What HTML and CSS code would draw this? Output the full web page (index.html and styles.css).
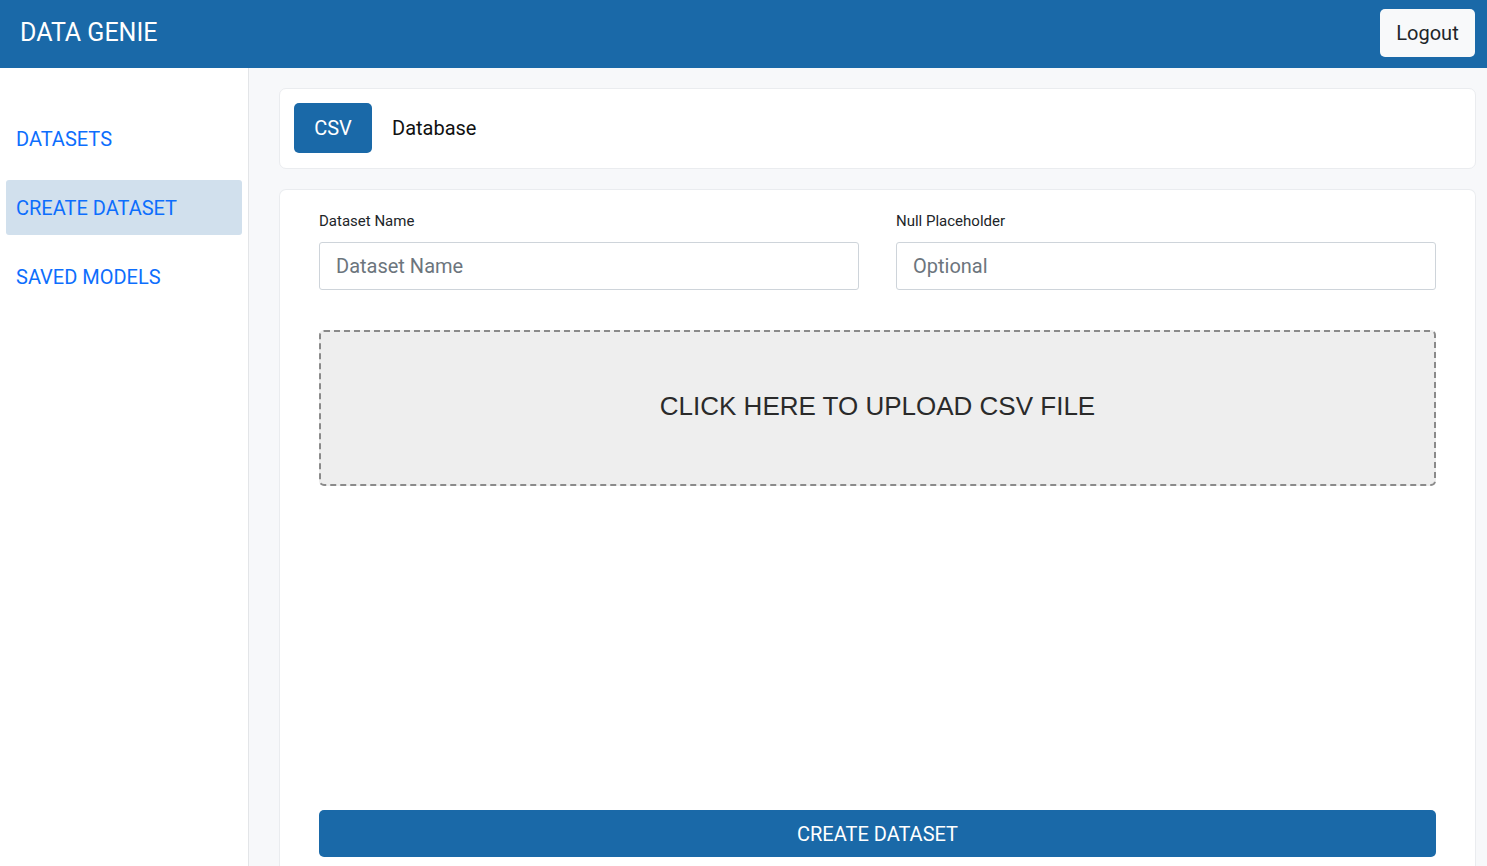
FILE: index.html
```html
<!DOCTYPE html>
<html>
<head>
<meta charset="utf-8">
<link rel="stylesheet" href="styles.css">
</head>
<body>
<header class="topbar">
  <div class="brand">DATA GENIE</div>
  <button class="logout">Logout</button>
</header>
<div class="layout">
  <nav class="sidebar">
    <a class="nav-item">DATASETS</a>
    <a class="nav-item active">CREATE DATASET</a>
    <a class="nav-item">SAVED MODELS</a>
  </nav>
  <main class="main">
    <section class="card tabs">
      <button class="tab tab-active">CSV</button>
      <button class="tab">Database</button>
    </section>
    <section class="card form">
      <div class="fields">
        <div class="field">
          <label class="label">Dataset Name</label>
          <input class="input" placeholder="Dataset Name">
        </div>
        <div class="field">
          <label class="label">Null Placeholder</label>
          <input class="input" placeholder="Optional">
        </div>
      </div>
      <div class="dropzone">CLICK HERE TO UPLOAD CSV FILE</div>
      <div class="spacer"></div>
      <button class="submit">CREATE DATASET</button>
    </section>
  </main>
</div>
</body>
</html>
```
FILE: styles.css
```css
* { box-sizing: border-box; }
html, body { margin: 0; padding: 0; height: 100%; }
body {
  font-family: Roboto, "Liberation Sans", Arial, sans-serif;
  background: #f7f8fa;
  overflow: hidden;
}
.topbar {
  height: 68px;
  background: #1a69a8;
  display: flex;
  align-items: center;
  justify-content: space-between;
  padding: 0 12px 0 20px;
}
.brand {
  color: #fff;
  font-size: 25px;
  margin-top: -4px;
}
.logout {
  height: 48px;
  width: 95px;
  background: #f8f9fa;
  border: none;
  border-radius: 5px;
  font-family: Roboto, sans-serif;
  font-size: 20px;
  color: #212529;
  margin-top: -3px;
}
.layout {
  display: flex;
  height: calc(100vh - 68px);
}
.sidebar {
  width: 249px;
  flex: none;
  background: #fff;
  border-right: 1px solid #e3e5e8;
  padding: 43px 6px 0 6px;
  display: flex;
  flex-direction: column;
  gap: 14px;
}
.nav-item {
  height: 55px;
  display: flex;
  align-items: center;
  padding-left: 10px;
  color: #0d6efd;
  font-size: 20px;
  border-radius: 3px;
}
.nav-item.active { background: #d1e0ed; }
.main {
  flex: 1;
  padding: 20px 11px 0 30px;
  display: flex;
  flex-direction: column;
  gap: 20px;
}
.card {
  background: #fff;
  border: 1px solid #eaecef;
  border-radius: 7px;
}
.tabs {
  height: 81px;
  display: flex;
  align-items: center;
  padding-left: 14px;
  padding-bottom: 2px;
  gap: 4px;
}
.tab {
  height: 50px;
  padding: 0 16px;
  border: none;
  border-radius: 5px;
  background: transparent;
  font-family: Roboto, sans-serif;
  font-size: 20px;
  color: #111;
}
.tab-active {
  background: #1a69a8;
  color: #fff;
  width: 78px;
}
.form {
  flex: 1;
  padding: 22px 39px 9px 39px;
  display: flex;
  flex-direction: column;
  border-bottom: none;
  border-bottom-left-radius: 0;
  border-bottom-right-radius: 0;
}
.fields {
  display: flex;
  gap: 37px;
}
.field { flex: 1; display: flex; flex-direction: column; }
.label {
  font-size: 15px;
  color: #212529;
  height: 20px;
  margin-bottom: 10px;
}
.input {
  height: 48px;
  border: 1px solid #ced4da;
  border-radius: 3px;
  padding: 0 16px;
  font-family: Roboto, sans-serif;
  font-size: 20px;
  color: #212529;
  outline: none;
}
.input::placeholder { color: #6c757d; }
.dropzone {
  margin-top: 40px;
  height: 156px;
  background: #eeeeee;
  border: 2px dashed #8a8a8a;
  border-radius: 5px;
  display: flex;
  align-items: center;
  justify-content: center;
  font-family: "Liberation Sans", Arial, sans-serif;
  font-size: 26px;
  color: #2a2a2a;
  padding-bottom: 4px;
}
.spacer { flex: 1; }
.submit {
  height: 47px;
  border: none;
  border-radius: 5px;
  background: #1a69a8;
  color: #fff;
  font-family: Roboto, sans-serif;
  font-size: 20px;
}
```
